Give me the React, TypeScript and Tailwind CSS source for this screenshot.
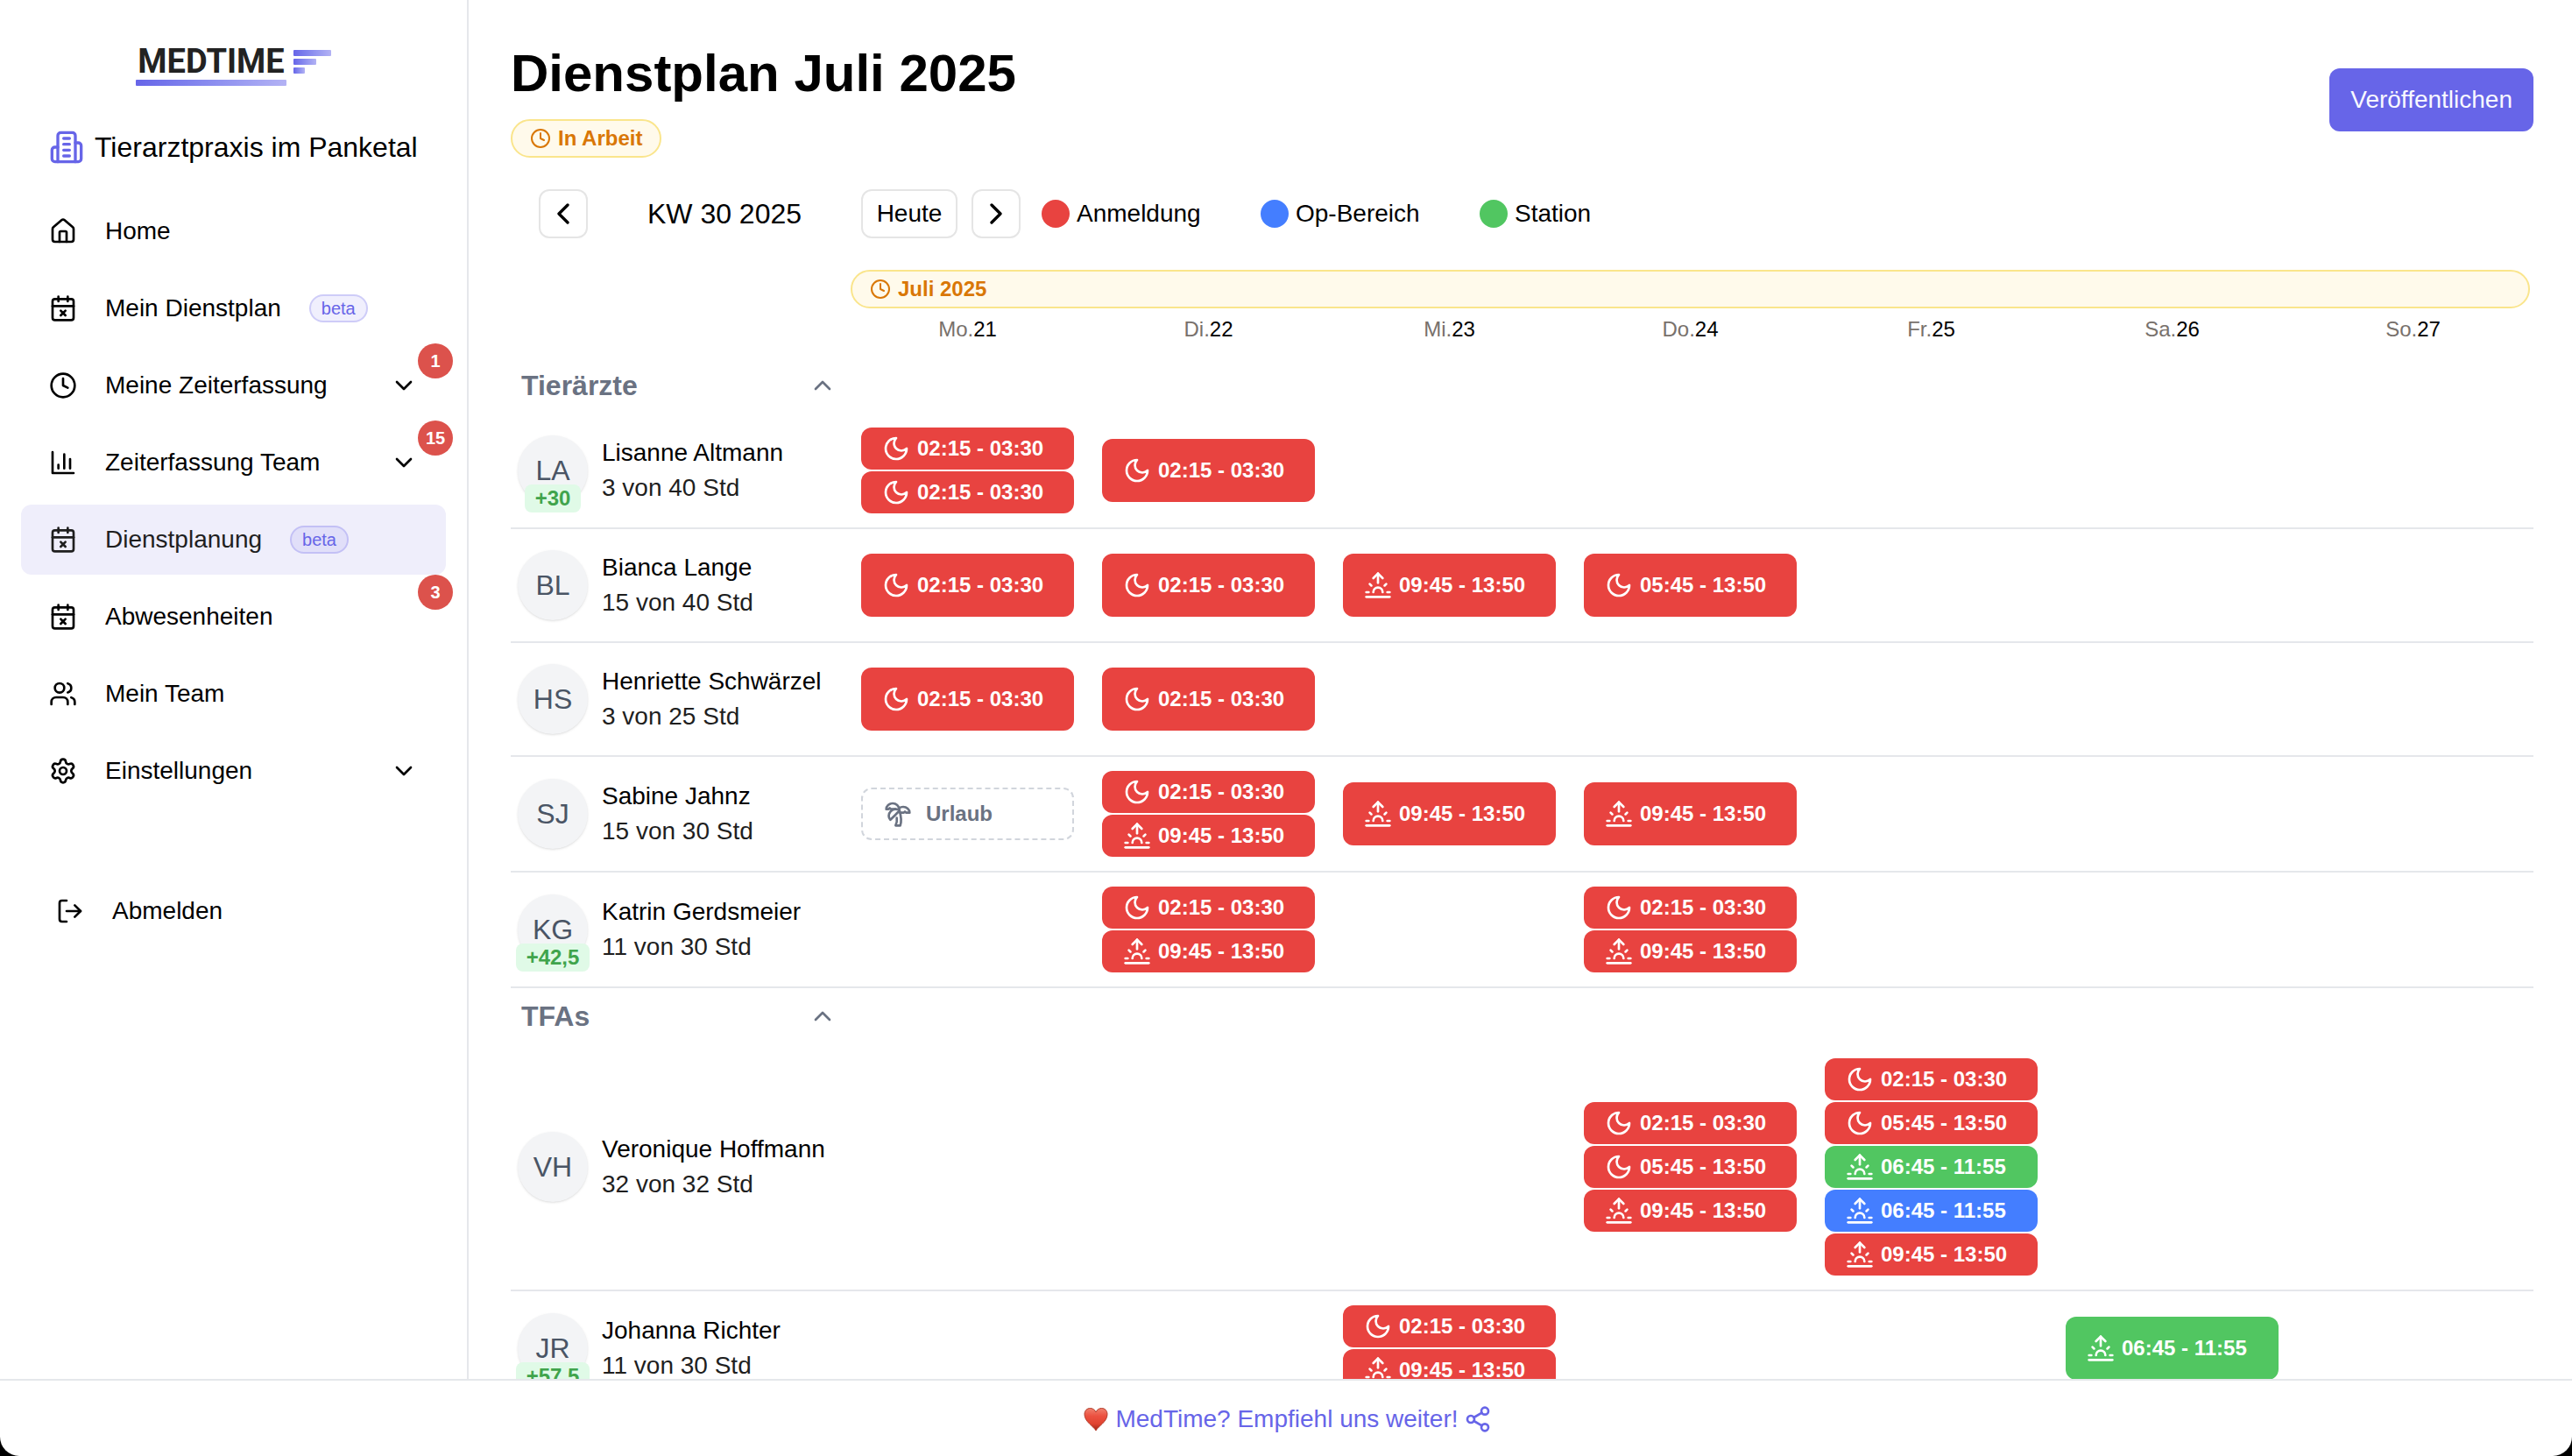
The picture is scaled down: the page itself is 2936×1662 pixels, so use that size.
import type { ReactNode } from 'react'
import {
  CalendarX,
  ChevronDown,
  ChevronLeft,
  ChevronRight,
  ChevronUp,
  Clock,
  House,
  LogOut,
  Settings,
  Share2,
  Sunrise,
  TreePalm,
  Users,
} from 'lucide-react'

type Area = 'anmeldung' | 'op' | 'station'
type ShiftKind = 'moon' | 'sunrise'
type Shift = { kind: ShiftKind; time: string; area: Area }
type Cell = Shift[] | 'urlaub' | null

const areaColor: Record<Area, string> = {
  anmeldung: 'bg-[#e84340]',
  op: 'bg-[#447eff]',
  station: 'bg-[#51c661]',
}

const night: Shift = { kind: 'moon', time: '02:15 - 03:30', area: 'anmeldung' }
const early: Shift = { kind: 'moon', time: '05:45 - 13:50', area: 'anmeldung' }
const day: Shift = { kind: 'sunrise', time: '09:45 - 13:50', area: 'anmeldung' }
const station: Shift = { kind: 'sunrise', time: '06:45 - 11:55', area: 'station' }
const op: Shift = { kind: 'sunrise', time: '06:45 - 11:55', area: 'op' }

type Person = { initials: string; name: string; hours: string; extra?: string; cells: Cell[] }

const groups: { title: string; people: Person[] }[] = [
  {
    title: 'Tierärzte',
    people: [
      { initials: 'LA', name: 'Lisanne Altmann', hours: '3 von 40 Std', extra: '+30', cells: [[night, night], [night], null, null, null, null, null] },
      { initials: 'BL', name: 'Bianca Lange', hours: '15 von 40 Std', cells: [[night], [night], [day], [early], null, null, null] },
      { initials: 'HS', name: 'Henriette Schwärzel', hours: '3 von 25 Std', cells: [[night], [night], null, null, null, null, null] },
      { initials: 'SJ', name: 'Sabine Jahnz', hours: '15 von 30 Std', cells: ['urlaub', [night, day], [day], [day], null, null, null] },
      { initials: 'KG', name: 'Katrin Gerdsmeier', hours: '11 von 30 Std', extra: '+42,5', cells: [null, [night, day], null, [night, day], null, null, null] },
    ],
  },
  {
    title: 'TFAs',
    people: [
      { initials: 'VH', name: 'Veronique Hoffmann', hours: '32 von 32 Std', cells: [null, null, null, [night, early, day], [night, early, station, op, day], null, null] },
      { initials: 'JR', name: 'Johanna Richter', hours: '11 von 30 Std', extra: '+57,5', cells: [null, null, [night, day], null, null, [station], null] },
    ],
  },
]

const days = [
  ['Mo.', '21'],
  ['Di.', '22'],
  ['Mi.', '23'],
  ['Do.', '24'],
  ['Fr.', '25'],
  ['Sa.', '26'],
  ['So.', '27'],
]

function MoonIcon() {
  return (
    <svg viewBox="0 0 24 24" className="size-8 shrink-0" fill="none" stroke="currentColor" strokeWidth="2" strokeLinecap="round" strokeLinejoin="round" aria-hidden="true">
      <path d="M12 3a6 6 0 0 0 9 9 9 9 0 1 1-9-9Z" />
    </svg>
  )
}

function ChartIcon() {
  return (
    <svg viewBox="0 0 24 24" className="size-8" fill="none" stroke="currentColor" strokeWidth="2" strokeLinecap="round" strokeLinejoin="round" aria-hidden="true">
      <path d="M3 3v18h18" />
      <path d="M18 17V9" />
      <path d="M13 17V5" />
      <path d="M8 17v-3" />
    </svg>
  )
}

function BuildingIcon() {
  return (
    <svg viewBox="0 0 24 24" className="size-10 shrink-0 text-[#6765e8]" fill="none" stroke="currentColor" strokeWidth="2" strokeLinecap="round" strokeLinejoin="round" aria-hidden="true">
      <path d="M6 22V4a2 2 0 0 1 2-2h8a2 2 0 0 1 2 2v18Z" />
      <path d="M6 12H4a2 2 0 0 0-2 2v6a2 2 0 0 0 2 2h2" />
      <path d="M18 9h2a2 2 0 0 1 2 2v9a2 2 0 0 1-2 2h-2" />
      <path d="M10 6h4" />
      <path d="M10 10h4" />
      <path d="M10 14h4" />
      <path d="M10 18h4" />
    </svg>
  )
}

function HeartIcon() {
  return (
    <svg viewBox="0 0 28 28" className="size-7" aria-hidden="true">
      <defs>
        <linearGradient id="heart" x1="0" y1="0" x2="0" y2="1">
          <stop offset="0" stopColor="#f0826f" />
          <stop offset="0.35" stopColor="#ec5140" />
          <stop offset="0.7" stopColor="#e04330" />
          <stop offset="1" stopColor="#9c2415" />
        </linearGradient>
      </defs>
      <path
        d="M14 27C11.500 22 1 17 1 8.500 1 4 4 1.500 7.500 1.500c3 0 5.300 1.700 6.500 4.500 1.200-2.800 3.500-4.500 6.500-4.500C24 1.500 27 4 27 8.500 27 17 16.500 22 14 27Z"
        fill="url(#heart)"
        stroke="#b23a28"
        strokeWidth="1"
      />
    </svg>
  )
}

function Logo() {
  return (
    <div className="flex items-start justify-center gap-2">
      <div className="flex flex-col gap-[3px]">
        <span className="px-0.5 font-['Roboto',sans-serif] text-[38px] leading-9 font-bold text-[#222222]">MEDTIME</span>
        <span className="h-[7px] rounded-[1px] bg-linear-to-r from-[#6765e8] to-[#b3b2f4]" />
      </div>
      <div className="flex flex-col gap-[3px] pt-[5px]">
        <span className="h-[7px] w-[43px] rounded-[1px] bg-linear-to-r from-[#6765e8] to-[#b3b2f4]" />
        <span className="h-[7px] w-[26px] rounded-[1px] bg-linear-to-r from-[#6765e8] to-[#b3b2f4]" />
        <span className="h-[7px] w-[13px] rounded-[1px] bg-linear-to-r from-[#6765e8] to-[#b3b2f4]" />
      </div>
    </div>
  )
}

type NavEntry = { label: string; icon: ReactNode; beta?: boolean; expandable?: boolean; count?: number; active?: boolean }

const nav: NavEntry[] = [
  { label: 'Home', icon: <House className="size-8" /> },
  { label: 'Mein Dienstplan', icon: <CalendarX className="size-8" />, beta: true },
  { label: 'Meine Zeiterfassung', icon: <Clock className="size-8" />, expandable: true, count: 1 },
  { label: 'Zeiterfassung Team', icon: <ChartIcon />, expandable: true, count: 15 },
  { label: 'Dienstplanung', icon: <CalendarX className="size-8" />, beta: true, active: true },
  { label: 'Abwesenheiten', icon: <CalendarX className="size-8" />, count: 3 },
  { label: 'Mein Team', icon: <Users className="size-8" /> },
  { label: 'Einstellungen', icon: <Settings className="size-8" />, expandable: true },
]

function NavItem({ item }: { item: NavEntry }) {
  return (
    <a
      href="#"
      aria-current={item.active ? 'page' : undefined}
      className={`relative flex h-20 items-center rounded-xl px-8 ${item.active ? 'bg-[#efeefb] text-[#1f1f1f]' : ''}`}
    >
      {item.icon}
      <span className="ml-8">{item.label}</span>
      {item.beta && (
        <span className="ml-8 flex h-8 items-center rounded-full border-2 border-[#6765e8]/25 bg-[#6765e8]/10 px-3 text-xl text-[#6765e8]">beta</span>
      )}
      {item.expandable && <ChevronDown className="ml-auto size-8" />}
      {item.count !== undefined && (
        <span className="absolute -top-2 -right-2 flex size-10 items-center justify-center rounded-full bg-[#dc524c] text-xl font-bold text-white">
          {item.count}
        </span>
      )}
    </a>
  )
}

function Sidebar() {
  return (
    <aside className="w-[535px] shrink-0 border-r-2 border-gray-200 px-6 pt-[52px]">
      <Logo />
      <div className="mt-[46px] flex h-12 items-center gap-3 pl-8 text-[32px] whitespace-nowrap">
        <BuildingIcon />
        <span>Tierarztpraxis im Panketal</span>
      </div>
      <nav className="mt-8 flex flex-col gap-2">
        {nav.map((item) => (
          <NavItem key={item.label} item={item} />
        ))}
      </nav>
      <button type="button" className="mt-20 flex h-20 w-full items-center gap-8 px-10">
        <LogOut className="size-8" />
        Abmelden
      </button>
    </aside>
  )
}

function StatusPill({ label }: { label: string }) {
  return (
    <div className="flex h-11 items-center gap-2 rounded-full border-2 border-[#fae58c] bg-[#fffaeb] px-5 text-2xl font-bold text-[#d97706]">
      <Clock className="size-6" />
      {label}
    </div>
  )
}

const legend: { label: string; area: Area }[] = [
  { label: 'Anmeldung', area: 'anmeldung' },
  { label: 'Op-Bereich', area: 'op' },
  { label: 'Station', area: 'station' },
]

function WeekToolbar() {
  return (
    <div className="mt-9 flex h-14 items-center pl-8">
      <button type="button" aria-label="Vorherige Woche" className="flex size-14 items-center justify-center rounded-xl border-2 border-[#e5e5e5]">
        <ChevronLeft className="size-10" />
      </button>
      <div className="w-[312px] text-center text-[32px]">KW 30 2025</div>
      <button type="button" className="h-14 w-[110px] rounded-xl border-2 border-[#e5e5e5] text-center">
        Heute
      </button>
      <button type="button" aria-label="Nächste Woche" className="ml-4 flex size-14 items-center justify-center rounded-xl border-2 border-[#e5e5e5]">
        <ChevronRight className="size-10" />
      </button>
      <ul className="ml-6 flex">
        {legend.map((entry) => (
          <li key={entry.area} className="flex w-[250px] items-center gap-2">
            <span className={`size-8 rounded-full ${areaColor[entry.area]}`} />
            {entry.label}
          </li>
        ))}
      </ul>
    </div>
  )
}

function ShiftChip({ shift, tall }: { shift: Shift; tall: boolean }) {
  return (
    <button
      type="button"
      className={`flex w-full items-center gap-2 overflow-hidden rounded-xl px-6 text-2xl font-bold whitespace-nowrap text-white ${tall ? 'h-18' : 'h-12'} ${areaColor[shift.area]}`}
    >
      {shift.kind === 'moon' ? <MoonIcon /> : <Sunrise className="size-8 shrink-0" />}
      {shift.time}
    </button>
  )
}

function CellContent({ cell }: { cell: Cell }) {
  if (cell === null) return null
  if (cell === 'urlaub') {
    return (
      <div className="flex h-15 items-center gap-4 rounded-xl border-2 border-dashed border-gray-300 px-6 text-2xl font-bold text-gray-500">
        <TreePalm className="size-8" />
        Urlaub
      </div>
    )
  }
  return (
    <div className="flex flex-col gap-0.5">
      {cell.map((shift, i) => (
        <ShiftChip key={i} shift={shift} tall={cell.length === 1} />
      ))}
    </div>
  )
}

function PersonRow({ person }: { person: Person }) {
  return (
    <tr className="border-b-2 border-gray-200">
      <th scope="row" className="h-[130px] p-0 pl-2 text-left font-normal">
        <div className="flex items-center gap-4">
          <div className="relative flex size-20 shrink-0 items-center justify-center rounded-full bg-gray-100 text-[32px] text-gray-600 shadow">
            {person.initials}
            {person.extra && (
              <span className="absolute -bottom-2 flex h-8 items-center rounded-lg bg-[#e0fae7] px-3 text-2xl font-bold text-[#40a44c]">{person.extra}</span>
            )}
          </div>
          <div className="leading-10 whitespace-nowrap">
            <div>{person.name}</div>
            <div className="text-[#1f1f1f]">{person.hours}</div>
          </div>
        </div>
      </th>
      {person.cells.map((cell, i) => (
        <td key={i} className={cell !== null && cell.length > 1 && cell !== 'urlaub' ? 'p-4' : 'px-4 py-0'}>
          <CellContent cell={cell} />
        </td>
      ))}
    </tr>
  )
}

function Schedule() {
  return (
    <table className="w-full table-fixed border-collapse">
      <colgroup>
        <col className="w-[384px]" />
        {days.map(([name]) => (
          <col key={name} />
        ))}
      </colgroup>
      <thead>
        <tr>
          <td className="p-0" />
          <td colSpan={7} className="px-1 py-0">
            <StatusPill label="Juli 2025" />
          </td>
        </tr>
        <tr>
          <td className="p-0" />
          {days.map(([name, date]) => (
            <th key={name} scope="col" className="h-14 p-0 pb-2 text-2xl font-normal">
              <span className="text-[#78716c]">{name}</span>
              {date}
            </th>
          ))}
        </tr>
      </thead>
      {groups.map((group) => (
        <tbody key={group.title}>
          <tr>
            <th scope="rowgroup" className="h-16 p-0">
              <button type="button" className="flex h-16 w-full items-center justify-between px-3 text-[32px] font-bold text-gray-500">
                {group.title}
                <ChevronUp className="size-8" />
              </button>
            </th>
          </tr>
          {group.people.map((person) => (
            <PersonRow key={person.name} person={person} />
          ))}
        </tbody>
      ))}
    </table>
  )
}

export default function App() {
  return (
    <div className="h-screen bg-black">
      <div className="flex h-full flex-col overflow-hidden rounded-b-[22px] bg-white font-['Liberation_Sans',Arial,sans-serif] text-[28px] leading-9 text-black">
        <div className="flex min-h-0 flex-1">
          <Sidebar />
          <main className="min-w-0 flex-1 overflow-hidden pt-12 pr-11 pl-12">
            <header className="flex items-start justify-between">
              <div className="flex flex-col items-start">
                <h1 className="text-[60px] leading-[72px] font-bold">Dienstplan Juli 2025</h1>
                <div className="mt-4">
                  <StatusPill label="In Arbeit" />
                </div>
              </div>
              <button type="button" className="mt-[30px] h-18 rounded-xl bg-[#6765e8] px-6 text-[#f8f8ff]">
                Veröffentlichen
              </button>
            </header>
            <WeekToolbar />
            <div className="mt-9">
              <Schedule />
            </div>
          </main>
        </div>
        <footer className="flex h-[88px] shrink-0 items-center justify-center border-t-2 border-gray-200 pt-0.5">
          <a href="#" className="flex items-center pl-1 text-[#6765e8]">
            <HeartIcon />
            <span className="mr-1.5 ml-2">MedTime? Empfiehl uns weiter!</span>
            <Share2 className="size-8" />
          </a>
        </footer>
      </div>
    </div>
  )
}
